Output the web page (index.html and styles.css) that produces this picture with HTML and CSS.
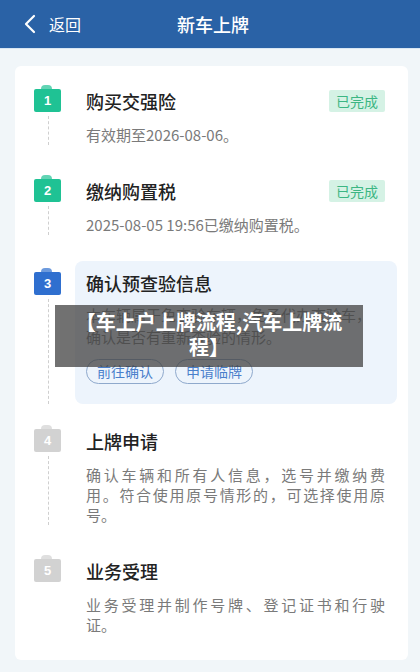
FILE: index.html
```html
<!DOCTYPE html>
<html lang="zh-CN">
<head>
    <meta charset="UTF-8">
    <meta name="viewport" content="width=device-width, initial-scale=1.0">
    <title>新车上牌</title>
    <link rel="stylesheet" href="styles.css">
</head>
<body>
    <header class="topbar">
        <div class="back">
            <svg width="12" height="20" viewBox="0 0 12 20"><path d="M10 2 L2 10 L10 18" fill="none" stroke="#fff" stroke-width="2.2" stroke-linecap="round" stroke-linejoin="round"/></svg>
            <span>返回</span>
        </div>
        <div class="title">新车上牌</div>
        <div></div>
    </header>

    <main class="card">
        <div class="step step-1">
            <div class="rail"><span class="num done">1</span><span class="line"></span></div>
            <div class="content">
                <div class="head"><h3>购买交强险</h3><span class="tag">已完成</span></div>
                <p class="desc">有效期至2026-08-06。</p>
            </div>
        </div>

        <div class="step step-2">
            <div class="rail"><span class="num done">2</span><span class="line"></span></div>
            <div class="content">
                <div class="head"><h3>缴纳购置税</h3><span class="tag">已完成</span></div>
                <p class="desc">2025-08-05 19:56已缴纳购置税。</p>
            </div>
        </div>

        <div class="step step-3">
            <div class="rail"><span class="num current">3</span><span class="line"></span></div>
            <div class="content">
                <div class="active-box">
                    <div class="head"><h3>确认预查验信息</h3></div>
                    <p class="desc">本车辆属于免查验车辆，免予代办查验车，确认是否有重新查验的情形。</p>
                    <div class="actions">
                        <button class="pill">前往确认</button>
                        <button class="pill">申请临牌</button>
                    </div>
                </div>
            </div>
        </div>

        <div class="step step-4">
            <div class="rail"><span class="num todo">4</span><span class="line"></span></div>
            <div class="content">
                <div class="head"><h3>上牌申请</h3></div>
                <p class="desc spread">
                    <span class="full">确认车辆和所有人信息，选号并缴纳费</span>
                    <span class="full">用。符合使用原号情形的，可选择使用原</span>
                    <span>号。</span>
                </p>
            </div>
        </div>

        <div class="step step-5">
            <div class="rail"><span class="num todo">5</span></div>
            <div class="content">
                <div class="head"><h3>业务受理</h3></div>
                <p class="desc spread">
                    <span class="full">业务受理并制作号牌、登记证书和行驶</span>
                    <span>证。</span>
                </p>
            </div>
        </div>
    </main>

    <div class="caption">【车上户上牌流程,汽车上牌流程】</div>
</body>
</html>
```

FILE: styles.css
```css
* {
    box-sizing: border-box;
}
body {
    margin: 0;
    background: #f1f6f9;
    font-family: "Noto Sans CJK SC", "Noto Sans", sans-serif;
    color: #222;
}
.topbar {
    height: 49px;
    background: #2a62a6;
    color: #fff;
    display: grid;
    grid-template-columns: 1fr auto 1fr;
    align-items: center;
    border-bottom: 1px solid #d8e6f3;
}
.back {
    display: flex;
    align-items: center;
    gap: 13px;
    padding-left: 24px;
    font-size: 16px;
}
.title {
    font-size: 18px;
    font-weight: 500;
    padding-left: 6px;
}
.card {
    margin: 17px 12px 10px 15px;
    background: #fff;
    border-radius: 6px;
    padding: 20px 23px 25px 19px;
}
.step {
    display: grid;
    grid-template-columns: 52px 1fr;
}
.step-1 { padding-bottom: 31px; }
.step-2 { padding-bottom: 26px; }
.step-3 { padding-bottom: 22px; }
.step-4 { padding-bottom: 31px; }
.rail {
    display: flex;
    flex-direction: column;
    align-items: flex-start;
}
.step-3 .rail {
    padding-top: 8px;
}
.num {
    position: relative;
    margin-top: 3px;
    width: 27px;
    height: 23px;
    border-radius: 2px;
    color: #fff;
    font-family: "Liberation Sans", sans-serif;
    font-size: 13px;
    font-weight: bold;
    display: flex;
    align-items: center;
    justify-content: center;
}
.num::before {
    content: "";
    position: absolute;
    top: -4px;
    left: 7px;
    width: 11px;
    height: 4px;
    border-radius: 4px 4px 0 0;
    background: inherit;
    opacity: 0.7;
}
.done { background: #1fc294; }
.current { background: #2f6fcf; }
.todo { background: #d2d2d2; }
.line {
    flex: 1;
    margin: 4px 0 0 14px;
    border-left: 1px dashed #cfcfcf;
}
.content {
    padding-top: 3px;
}
.step-3 .content {
    padding-top: 0;
}
.head {
    display: flex;
    justify-content: space-between;
    align-items: center;
    height: 24px;
}
.head h3 {
    margin: 0;
    font-size: 18px;
    font-weight: 500;
    color: #222;
}
.tag {
    background: #d5f2e5;
    color: #3cb683;
    font-size: 14px;
    line-height: 22px;
    padding: 0 7px;
    border-radius: 2px;
}
.desc {
    margin: 12px 0 0;
    font-size: 15px;
    line-height: 20px;
    color: #7a7a7a;
}
.spread span {
    display: block;
    white-space: nowrap;
}
.spread .full {
    text-align: justify;
    text-align-last: justify;
}
.active-box {
    margin: 0 -12px 0 -11px;
    padding: 10px 12px 20px 11px;
    background: #edf4fc;
    border-radius: 8px;
}
.active-box .desc {
    margin-top: 9px;
    line-height: 22px;
}
.actions {
    display: flex;
    gap: 11px;
    margin-top: 11px;
}
.pill {
    height: 25px;
    padding: 0 10px;
    border: 1px solid #8fa9cc;
    border-radius: 13px;
    background: transparent;
    color: #4a7fcb;
    font-family: inherit;
    font-size: 14px;
    line-height: 23px;
}
.caption {
    position: absolute;
    left: 55px;
    top: 305px;
    width: 308px;
    height: 62px;
    padding: 4px 10px 0;
    background: rgba(65, 65, 65, 0.75);
    color: #fff;
    font-size: 20px;
    font-weight: bold;
    line-height: 25px;
    text-align: center;
}
```
